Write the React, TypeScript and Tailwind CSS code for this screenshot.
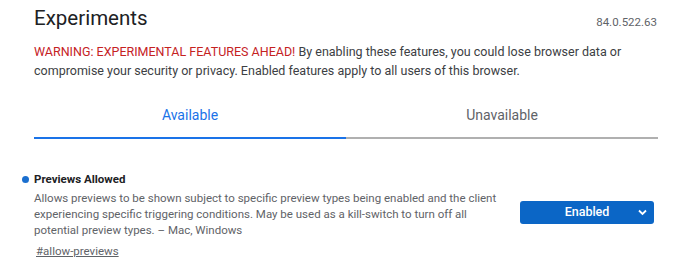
import React from "react";

export default function App() {
  return (
    <div className="w-[700px] h-[270px] bg-white overflow-hidden" style={{ fontFamily: "Roboto, 'Liberation Sans', sans-serif" }}>
      <div className="pl-[34px] pr-[42px]">
        <div className="flex items-end justify-between pt-[4px] h-[32px]">
          <h1 className="text-[20.5px] leading-[28px] text-[#202124]">Experiments</h1>
          <span className="text-[11.5px] leading-[14px] text-[#5f6368] mb-[3px] mr-[1px]">84.0.522.63</span>
        </div>
        <p className="mt-[10px] text-[12.5px] leading-[19px] text-[#3c4043]">
          <span className="text-[#c5221f]">WARNING: EXPERIMENTAL FEATURES AHEAD!</span> By enabling these features, you could lose browser data or compromise your security or privacy. Enabled features apply to all users of this browser.
        </p>
        <div className="mt-[13px] flex">
          <div className="flex-1 h-[46px] flex items-center justify-center text-[14px] text-[#1a73e8] border-b-2 border-[#1a73e8]">Available</div>
          <div className="flex-1 h-[46px] flex items-center justify-center text-[14px] text-[#5f6368] border-b-2 border-[#b0b0b0]">Unavailable</div>
        </div>
      </div>
      <div className="mt-[32px] pl-[22px] pr-[46px] flex items-start">
        <div className="w-[12px] pt-[5px]">
          <div className="w-[7px] h-[7px] rounded-full bg-[#1a6fcf]"></div>
        </div>
        <div className="flex-1">
          <div className="text-[11.5px] leading-[16px] font-bold text-[#202124]">Previews Allowed</div>
          <p className="mt-[3px] w-[476px] text-[11.5px] leading-[16px] text-[#5f6368]">
            Allows previews to be shown subject to specific preview types being enabled and the client experiencing specific triggering conditions. May be used as a kill-switch to turn off all potential preview types. – Mac, Windows
          </p>
          <a className="inline-block mt-[1px] ml-[2px] text-[11.5px] leading-[16px] text-[#5f6368] underline">#allow-previews</a>
        </div>
        <div className="mt-[30px] w-[134px] h-[23px] rounded-[3px] bg-[#0b66c6] flex items-center relative">
          <span className="flex-1 text-center text-white text-[12.5px] font-medium">Enabled</span>
          <svg className="absolute right-[7px] top-[8px]" width="9" height="7" viewBox="0 0 9 7">
            <path d="M1 1.5 L4.5 5 L8 1.5" stroke="white" strokeWidth="1.8" fill="none" />
          </svg>
        </div>
      </div>
    </div>
  );
}
